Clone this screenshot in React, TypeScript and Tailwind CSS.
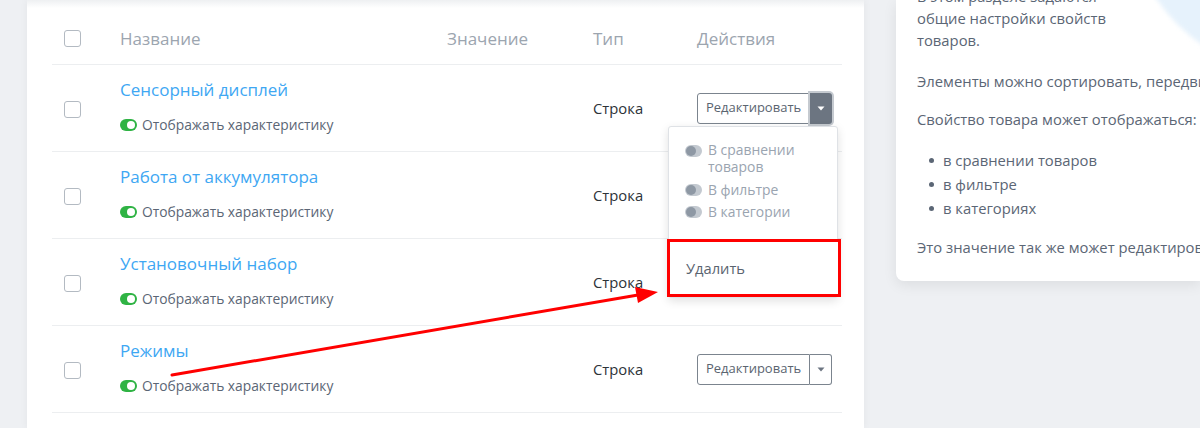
import React from "react";

const font = { fontFamily: '"Open Sans", "Noto Sans", sans-serif' };

function Checkbox() {
  return <div className="w-[17px] h-[17px] rounded-[3px] border-[1.5px] border-[#b3bac2] bg-white" />;
}

function Toggle() {
  return (
    <span className="inline-flex items-center w-[17px] h-[12px] rounded-full bg-[#2fb344] pr-[2px] justify-end">
      <span className="w-[8px] h-[8px] rounded-full bg-white" />
    </span>
  );
}

function GrayToggle() {
  return (
    <span className="inline-flex items-center w-[17px] h-[12px] rounded-full bg-[#c3c9d0] pl-[1px]">
      <span className="w-[10px] h-[10px] rounded-full bg-[#8e98a4]" />
    </span>
  );
}

function Caret({ color }: { color: string }) {
  return (
    <svg width="8" height="5" viewBox="0 0 8 5">
      <path d="M0.5 0.5 L7.5 0.5 L4 4.5 Z" fill={color} />
    </svg>
  );
}

function EditButton({ active }: { active?: boolean }) {
  return (
    <div className="flex h-[31px]">
      <div className="flex items-center px-[8px] border border-[#7b848e] rounded-l-[3px] text-[13px] text-[#5a6470] bg-white">
        Редактировать
      </div>
      {active ? (
        <div className="w-[22px] flex items-center justify-center bg-[#6c7581] rounded-r-[3px] shadow-[0_0_0_2px_#c5cad0]">
          <Caret color="#ffffff" />
        </div>
      ) : (
        <div className="w-[22px] flex items-center justify-center border border-l-0 border-[#7b848e] rounded-r-[3px] bg-white">
          <Caret color="#6c7581" />
        </div>
      )}
    </div>
  );
}

const rows = ["Сенсорный дисплей", "Работа от аккумулятора", "Установочный набор", "Режимы"];

export default function App() {
  return (
    <div className="relative w-[1200px] h-[428px] overflow-hidden bg-[#eef0f3] flex" style={font}>
      <div className="w-[27px] shrink-0" />
      {/* main card */}
      <div className="relative w-[837px] shrink-0 bg-white shadow-[0_0_8px_rgba(0,0,0,0.05)]">
        <div className="absolute left-0 right-0 top-0 h-[8px] bg-gradient-to-b from-[#eef0f2] to-white" />
        <div className="ml-[25px] w-[790px] pt-[13px]">
          <div className="grid grid-cols-[68px_327px_146px_104px_145px] h-[52px] items-center border-b border-[#eceef0] text-[17px] text-[#9ca5af]">
            <div className="pl-[12px] flex"><Checkbox /></div>
            <div>Название</div>
            <div>Значение</div>
            <div>Тип</div>
            <div>Действия</div>
          </div>
          {rows.map((r, i) => (
            <div
              key={r}
              className="relative grid grid-cols-[68px_327px_146px_104px_145px] h-[87px] items-center border-b border-[#eceef0]"
            >
              <div className="pl-[12px] flex pt-[2px]"><Checkbox /></div>
              <div className="flex flex-col self-start pt-[14px]">
                <div className="text-[17px] leading-[22px] text-[#3ea7f3]">{r}</div>
                <div className="mt-[15px] flex items-center gap-[5px] h-[18px]">
                  <Toggle />
                  <span className="text-[13.8px] text-[#5b6675]">Отображать характеристику</span>
                </div>
              </div>
              <div />
              <div className="text-[14.8px] text-[#2d3338]">Строка</div>
              <div className="flex">
                {i === 0 && <EditButton active />}
                {i === 3 && <EditButton />}
              </div>
            </div>
          ))}
        </div>
        {/* dropdown menu */}
        <div className="absolute left-[641px] top-[126px] w-[170px] h-[172px] bg-white border border-[#dfe2e6] rounded-[3px] shadow-[0_3px_10px_rgba(0,0,0,0.12)]">
          <div className="pl-[16px] pt-[14px] flex flex-col text-[13.9px] text-[#9aa4b0]">
            <div className="flex items-start gap-[6px]">
              <span className="mt-[4px] flex"><GrayToggle /></span>
              <span className="leading-[17px]">В сравнении<br />товаров</span>
            </div>
            <div className="flex items-center gap-[6px] mt-[4px] h-[22px]">
              <GrayToggle />
              <span>В фильтре</span>
            </div>
            <div className="flex items-center gap-[6px] h-[22px]">
              <GrayToggle />
              <span>В категории</span>
            </div>
          </div>
        </div>
        <div className="absolute left-[640px] top-[239px] w-[174px] h-[58px] border-[3px] border-[#ff0000] flex items-center pl-[16px] text-[14.7px] text-[#5a6470] bg-white">
          Удалить
        </div>
      </div>
      <div className="w-[32px] shrink-0" />
      {/* right panel */}
      <div className="relative flex-1 h-[281px] bg-white rounded-bl-[8px] shadow-[0_4px_14px_rgba(0,0,0,0.08)] overflow-hidden">
        <div className="absolute left-[230px] top-[-276px] w-[352px] h-[352px] rounded-full bg-[#e6f2fc] blur-[2px]" />
        <div className="relative pl-[21px] text-[14.8px] leading-[22px] text-[#5b6675] whitespace-nowrap mt-[-15px]">
          <p>В этом разделе задаются</p>
          <p>общие настройки свойств</p>
          <p>товаров.</p>
          <p className="mt-[19px]">Элементы можно сортировать, передвигая их мышкой.</p>
          <p className="mt-[16px]">Свойство товара может отображаться:</p>
          <ul className="mt-[18px] pl-[12px]">
            <li className="flex items-center h-[24px]"><span className="w-[5px] h-[5px] rounded-full bg-[#5b6675] mr-[9px]" />в сравнении товаров</li>
            <li className="flex items-center h-[24px]"><span className="w-[5px] h-[5px] rounded-full bg-[#5b6675] mr-[9px]" />в фильтре</li>
            <li className="flex items-center h-[24px]"><span className="w-[5px] h-[5px] rounded-full bg-[#5b6675] mr-[9px]" />в категориях</li>
          </ul>
          <p className="mt-[16px]">Это значение так же может редактироваться в карточке товара.</p>
        </div>
      </div>
      {/* red arrow annotation */}
      <svg className="absolute left-0 top-0 pointer-events-none" width="1200" height="428">
        <line x1="172" y1="375" x2="638" y2="295" stroke="#ff0000" strokeWidth="3" strokeLinecap="round" />
        <polygon points="658,292 635,287 638,303" fill="#ff0000" />
      </svg>
    </div>
  );
}
